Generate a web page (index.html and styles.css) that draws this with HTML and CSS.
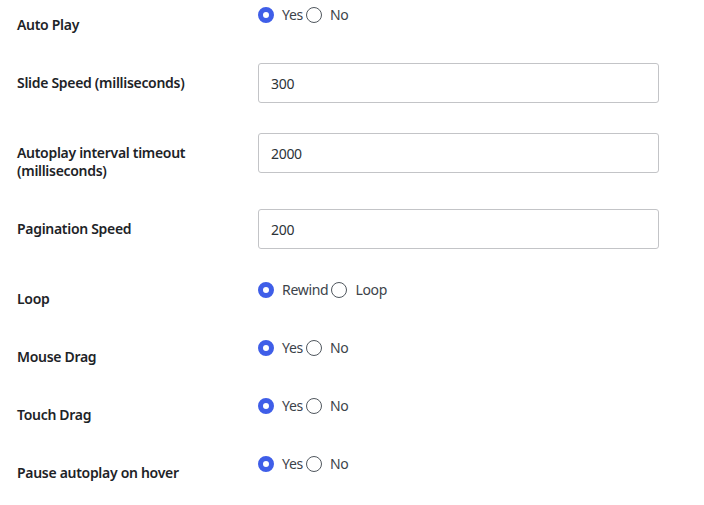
FILE: index.html
```html
<!DOCTYPE html>
<html lang="en">
<head>
    <meta charset="UTF-8">
    <meta name="viewport" content="width=device-width, initial-scale=1.0">
    <title>Slider Settings</title>
    <link rel="stylesheet" href="styles.css">
</head>
<body>

    <table class="form-table">
        <tr class="radio-row">
            <th>Auto Play</th>
            <td>
                <div class="choices">
                    <label class="choice"><input type="radio" name="autoplay" checked>Yes</label>
                    <label class="choice"><input type="radio" name="autoplay">No</label>
                </div>
            </td>
        </tr>
        <tr>
            <th>Slide Speed (milliseconds)</th>
            <td><input class="text-field" type="text" value="300"></td>
        </tr>
        <tr>
            <th>Autoplay interval timeout<br>(milliseconds)</th>
            <td><input class="text-field" type="text" value="2000"></td>
        </tr>
        <tr>
            <th>Pagination Speed</th>
            <td><input class="text-field" type="text" value="200"></td>
        </tr>
        <tr class="radio-row">
            <th>Loop</th>
            <td>
                <div class="choices">
                    <label class="choice"><input type="radio" name="loop" checked>Rewind</label>
                    <label class="choice"><input type="radio" name="loop">Loop</label>
                </div>
            </td>
        </tr>
        <tr class="radio-row">
            <th>Mouse Drag</th>
            <td>
                <div class="choices">
                    <label class="choice"><input type="radio" name="mousedrag" checked>Yes</label>
                    <label class="choice"><input type="radio" name="mousedrag">No</label>
                </div>
            </td>
        </tr>
        <tr class="radio-row">
            <th>Touch Drag</th>
            <td>
                <div class="choices">
                    <label class="choice"><input type="radio" name="touchdrag" checked>Yes</label>
                    <label class="choice"><input type="radio" name="touchdrag">No</label>
                </div>
            </td>
        </tr>
        <tr class="radio-row">
            <th>Pause autoplay on hover</th>
            <td>
                <div class="choices">
                    <label class="choice"><input type="radio" name="pausehover" checked>Yes</label>
                    <label class="choice"><input type="radio" name="pausehover">No</label>
                </div>
            </td>
        </tr>
    </table>

</body>
</html>
```

FILE: styles.css
```css
body {
    font-family: "Noto Sans", "Open Sans", sans-serif;
    font-size: 14px;
    letter-spacing: -0.3px;
    color: #3c434a;
    background-color: #fff;
    margin: 0;
    padding: 0 0 0 17px;
}

.form-table {
    border-collapse: collapse;
    margin-top: -11px;
}

.form-table th {
    width: 221px;
    padding: 26px 10px 14px 0;
    text-align: left;
    vertical-align: top;
    font-weight: 600;
    line-height: 18px;
    color: #1d2327;
}

.form-table td {
    padding: 15px 10px;
    vertical-align: top;
}

.radio-row td {
    padding: 16px 10px 0;
}

.form-table tr:first-child th {
    padding-top: 27px;
}

.text-field {
    box-sizing: border-box;
    width: 401px;
    height: 40px;
    padding: 0 12px;
    margin: 0;
    border: 1px solid #c3c4c7;
    border-radius: 3px;
    font-family: inherit;
    font-size: 14px;
    letter-spacing: -0.3px;
    color: #2c3338;
}

/* Yes / No radio group */
.choices {
    display: flex;
    align-items: center;
    gap: 3px;
    height: 20px;
}

.choice {
    display: inline-flex;
    align-items: center;
    gap: 8px;
    line-height: 20px;
}

.choice input {
    appearance: none;
    box-sizing: border-box;
    width: 16px;
    height: 16px;
    margin: 0;
    border: 1px solid #50575e;
    border-radius: 50%;
    background-color: #fff;
}

.choice input:checked {
    border: 5px solid #3f5ee8;
}
```
